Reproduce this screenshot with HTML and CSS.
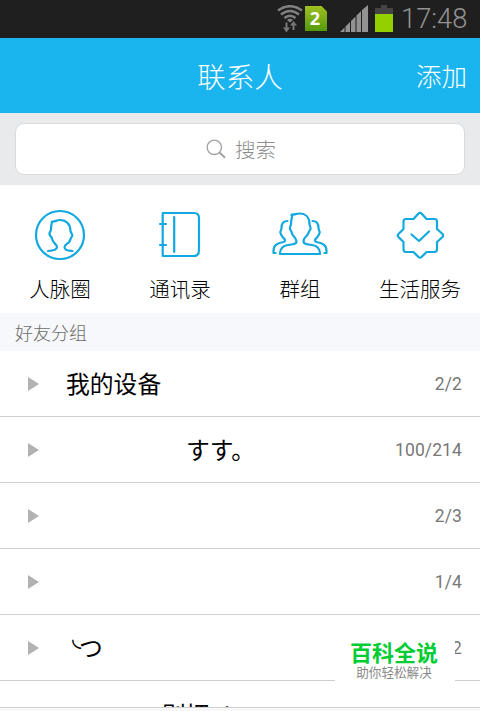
FILE: index.html
```html
<!DOCTYPE html>
<html lang="zh-CN">
<head>
    <meta charset="UTF-8">
    <title>联系人</title>
    <link rel="stylesheet" href="styles.css">
</head>
<body>
    <div class="phone">
        <div class="status-bar">
            <svg class="wifi" width="28" height="30" viewBox="0 0 28 30" fill="none" stroke="#808080" stroke-width="2.6">
                <path d="M2 5.500Q14-3 26 5.500"/>
                <path d="M5 9.500Q14 2.500 23 9.500"/>
                <path d="M8.500 13Q14 8.500 19.500 13"/>
                <path d="M11 15q3-2.500 6 0l-3 2.500z" fill="#858585" stroke="none"/>
                <path d="M10.500 17.500v7M17.500 18v7" stroke="#777" stroke-width="2"/>
                <path d="M7 22.500h7l-3.500 5zM14 20.500h7l-3.500-4.500z" fill="#777" stroke="none"/>
            </svg>
            <div class="sim">2</div>
            <svg class="signal" width="28" height="27" viewBox="0 0 28 27" fill="#929292">
                <path d="M0 27l4.500-4.500V27zM5.500 27v-5.500l4.500-4.500v10zM11 27V16l4.500-4.500V27zM16.500 27V10.500L21 6v21zM22 27V5l6-5v27z"/>
            </svg>
            <svg class="battery" width="18" height="27" viewBox="0 0 18 27">
                <path d="M6 0h6v3h6v6H0V3h6z" fill="#444"/>
                <path d="M0 9h18v18H0z" fill="#93d000"/>
            </svg>
            <span class="time">17:48</span>
        </div>

        <div class="header">
            <span></span>
            <h1>联系人</h1>
            <a class="add">添加</a>
        </div>

        <div class="search">
            <div class="search-box">
                <svg width="20" height="20" viewBox="0 0 20 20" fill="none" stroke="#a2a2a2" stroke-width="1.4">
                    <circle cx="8.300" cy="8.300" r="7.200"/>
                    <path d="M13.500 13.500l5.500 5.200" stroke-width="1.900"/>
                </svg>
                <span>搜索</span>
            </div>
        </div>

        <div class="shortcuts">
            <div class="shortcut">
                <svg width="56" height="54" viewBox="0 0 56 54">
                    <circle cx="28" cy="27" r="24"/>
                    <path d="M16 43c5-.3 9-1 9-4 0-2.500-3.500-3.500-4.500-7-.5-2-1-3.500-2.500-4.500-1.500-2.500 0-4 1-5.500 0-3 .3-5.500 1-8.500 3 .5 4.500-1.500 8-1.500 6.500 0 10.500 4.500 10.500 11 0 2 3 3 1.500 5.500-1.500 1.500-1.500 3-2.500 5-1 2-5 3-5 5.500 0 3.500 3.500 3.500 8 4"/>
                </svg>
                <span>人脉圈</span>
            </div>
            <div class="shortcut">
                <svg width="56" height="54" viewBox="0 0 56 54">
                    <path d="M10.700 5H42q5 0 5 5v32q0 6-5 6H10.700zM22.200 9v35M8 16h6M8 37h6"/>
                </svg>
                <span>通讯录</span>
            </div>
            <div class="shortcut">
                <svg width="56" height="54" viewBox="0 0 56 54">
                    <path d="M19.500 6.500c3 .5 4.500-1 8-1 6.500 0 10 4.500 10 10.500 0 2 2.300 4 .5 6-1.500 1.500-1.500 4.500-3.500 6-2.500 2-3 3-3 5.500 0 2.500 4 3 8.500 3.500 5.500.7 8 3.500 8 9H8c0-5.500 2.500-8.300 8-9 4.500-.5 8.500-1 8.500-3.500s-1-3.500-3-5.500c-2-2-1.500-4.500-3-6-1.800-2 .5-4 .5-6s.5-5 1-7z"/>
                    <path d="M15.500 13c-4 0-6 3-6 7 0 2.500-2 3.500-1 5 1 2 1 3.500 3 5 2 1.500 2 3.500 0 4-6 1.200-10 3-10 9v2h2M40.500 13c4 0 6 3 6 7 0 2.500 2 3.500 1 5-1 2-1 3.500-3 5-2 1.500-2 3.500 0 4 6 1.200 10 3 10 9v2h-2"/>
                </svg>
                <span>群组</span>
            </div>
            <div class="shortcut">
                <svg width="56" height="54" viewBox="0 0 56 54">
                    <path d="M26.500 5.500q1.500-1.500 3 0l5 5.500h8q2.500 0 2.500 2.500v7.500l5.500 5q1.200 1.500 0 3l-5.500 5V41q0 3-2.500 3h-8l-5 5q-1.500 1.300-3 0l-5-5h-7.500q-2.500 0-2.500-3v-7l-5-5q-1.500-1.500 0-3l5-5v-7.500q0-2.500 2.500-2.500h7.500z"/>
                    <path d="M19.500 26.500l7.500 6.500 10-9.500"/>
                </svg>
                <span>生活服务</span>
            </div>
        </div>

        <div class="section-title">好友分组</div>

        <div class="groups">
            <div class="group"><i class="arrow"></i><span class="name">我的设备</span><span class="count">2/2</span></div>
            <div class="group"><i class="arrow"></i><span class="name name-mid">すす。</span><span class="count">100/214</span></div>
            <div class="group"><i class="arrow"></i><span class="name"></span><span class="count">2/3</span></div>
            <div class="group"><i class="arrow"></i><span class="name"></span><span class="count">1/4</span></div>
            <div class="group"><i class="arrow"></i><span class="name name-arc"><span class="arc">◟</span>つ</span><span class="count">2</span></div>
            <div class="group"><i class="arrow"></i><span class="name name-last">别押ノ</span></div>
        </div>
        <div class="bottom-bar"></div>

        <div class="watermark">
            <strong>百科全说</strong>
            <span>助你轻松解决</span>
        </div>
    </div>
</body>
</html>
```
FILE: styles.css
```css
* {
    box-sizing: border-box;
}
body {
    margin: 0;
    background: #fff;
    color: #000;
    font-family: "Noto Sans CJK SC", sans-serif;
    font-weight: 400;
}
.phone {
    position: relative;
    display: flex;
    flex-direction: column;
    width: 480px;
    height: 711px;
    overflow: hidden;
}
.status-bar {
    display: flex;
    justify-content: flex-end;
    flex: none;
    height: 38px;
    padding: 5px 12px 0 0;
    background: #1f1f1f;
}
.wifi {
    margin-right: 1px;
}
.sim {
    width: 22px;
    height: 25px;
    margin: 1px 13px 0 0;
    background: linear-gradient(#a0c020, #559a10);
    clip-path: polygon(0 0, 75% 0, 100% 22%, 100% 100%, 0 100%);
    color: #fff;
    font: bold 18px/25px "Open Sans", sans-serif;
    text-align: center;
    padding-right: 2px;
}
.signal {
    margin-right: 7px;
}
.battery {
    margin-right: 8px;
}
.time {
    width: 67px;
    color: #929292;
    font: 300 27.300px/29px Roboto, sans-serif;
    white-space: nowrap;
}
.header {
    display: grid;
    grid-template-columns: 1fr auto 1fr;
    align-items: center;
    flex: none;
    height: 75px;
    padding: 0 13px 1px;
    background: #1ab4ee;
    color: #fff;
}
.header h1 {
    margin: 0;
    font-size: 28.500px;
    font-weight: 300;
}
.add {
    justify-self: end;
    padding-bottom: 2px;
    font-size: 25.500px;
    font-weight: 300;
}
.search {
    flex: none;
    height: 72px;
    padding: 10px 15px;
    background: #e9eaec;
}
.search-box {
    display: flex;
    align-items: center;
    justify-content: center;
    gap: 9px;
    height: 52px;
    padding-left: 2px;
    border: 1px solid #d9dadc;
    border-radius: 9px;
    background: #fff;
    color: #8c8c8c;
    font-size: 20.500px;
    font-weight: 300;
}
.shortcuts {
    display: grid;
    grid-template-columns: repeat(4, 1fr);
    flex: none;
    height: 128px;
    padding-top: 23px;
}
.shortcut {
    display: flex;
    flex-direction: column;
    align-items: center;
    gap: 11px;
    font-size: 20.500px;
    font-weight: 300;
    line-height: 30px;
}
.shortcut svg {
    fill: none;
    stroke: #12a8e0;
    stroke-width: 2.2;
    stroke-linecap: round;
    stroke-linejoin: round;
}
.section-title {
    flex: none;
    height: 38px;
    padding-left: 15px;
    background: #f7f8fb;
    color: #6c6c6c;
    font-size: 18px;
    font-weight: 300;
    line-height: 38px;
}
.groups {
    flex: none;
    height: 356px;
    overflow: hidden;
}
.group {
    display: flex;
    align-items: center;
    height: 66px;
    padding: 0 18px 0 28px;
    border-bottom: 1px solid #d0d0d2;
}
.arrow {
    border-left: 11px solid #b2b2b2;
    border-top: 7px solid transparent;
    border-bottom: 7px solid transparent;
}
.name {
    flex: 1;
    padding: 0 0 2px 27px;
    font-size: 23.800px;
    line-height: 34px;
}
.name-mid {
    padding-left: 147px;
}
.name-arc {
    display: flex;
    padding-left: 33px;
}
.name-last {
    padding: 0 0 0 123px;
}
.arc {
    width: 7px;
    font-family: "DejaVu Sans", sans-serif;
    line-height: 16px;
}
.count {
    padding-top: 1px;
    color: #777;
    font: 400 17.500px/22px Roboto, sans-serif;
    letter-spacing: 0.1px;
}
.bottom-bar {
    flex: none;
    height: 4px;
    border-top: 1px solid #d0d0d2;
    background: #f8f8f8;
}
/* 右下角水印，盖住列表 */
.watermark {
    position: absolute;
    left: 335px;
    top: 630px;
    width: 120px;
    height: 54px;
    padding: 8px 2px 0 0;
    display: flex;
    flex-direction: column;
    align-items: center;
    background: #fff;
}
.watermark strong {
    color: #00cc33;
    font-size: 22px;
    font-weight: 700;
    line-height: 26px;
}
.watermark span {
    color: #888;
    font-size: 12.600px;
    line-height: 16px;
}
```
